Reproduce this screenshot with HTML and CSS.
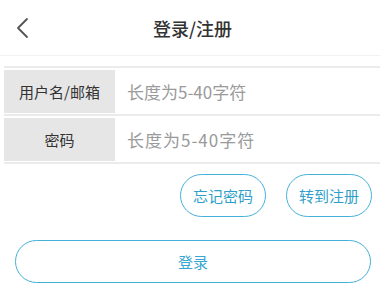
FILE: index.html
```html
<!DOCTYPE html>
<html lang="zh-CN">
<head>
<meta charset="UTF-8" />
<meta name="viewport" content="width=device-width, initial-scale=1.0">
<title>登录/注册</title>
<link rel="stylesheet" href="styles.css">
</head>
<body>
<header>
<a class="back" href="#">
<svg width="14" height="22" viewBox="0 0 14 22"><path d="M12 2 L3 11 L12 20" fill="none" stroke="#555" stroke-width="1.8" stroke-linecap="round" stroke-linejoin="round"/></svg>
</a>
<div class="title">登录/注册</div>
<div></div>
</header>

<div class="form">
<div class="row">
<label class="label">用户名/邮箱</label>
<input class="field" type="text" placeholder="长度为5-40字符">
</div>
<div class="row">
<label class="label">密码</label>
<input class="field pwd" type="password" placeholder="长度为5-40字符">
</div>
</div>

<div class="links">
<a class="pill" href="#">忘记密码</a>
<a class="pill" href="#">转到注册</a>
</div>

<div class="login">
<button class="login-btn">登录</button>
</div>
</body>
</html>
```

FILE: styles.css
```css
body {
  margin: 0;
  font-family: "Noto Sans CJK SC", "Noto Sans", sans-serif;
  background-color: #fff;
  color: #333;
}
header {
  height: 55px;
  display: grid;
  grid-template-columns: 60px 1fr 60px;
  align-items: center;
  border-bottom: 1px solid #f2f2f2;
}
.back {
  padding-left: 15px;
  display: flex;
  align-items: center;
}
.title {
  text-align: center;
  font-size: 18px;
  font-weight: 500;
  color: #333;
  margin-left: 5px;
}
.form {
  margin: 10px 0 0 4px;
  border-top: 2px solid #ebebeb;
}
.row {
  display: flex;
  align-items: center;
  padding: 2px 0 1px;
  border-bottom: 2px solid #ebebeb;
}
.label {
  width: 111px;
  height: 43px;
  background-color: #e6e6e6;
  display: flex;
  align-items: center;
  justify-content: center;
  font-size: 15px;
  color: #333;
}
.field {
  flex: 1;
  border: none;
  outline: none;
  height: 43px;
  padding: 0 0 0 12px;
  font-family: "Noto Sans CJK SC", "Open Sans", sans-serif;
  font-size: 17px;
  color: #333;
  background: transparent;
}
.field::placeholder {
  color: #9a9a9a;
}
.pwd::placeholder {
  letter-spacing: 1px;
}
.links {
  display: flex;
  justify-content: flex-end;
  gap: 20px;
  padding: 10px 8px 0 0;
}
.pill {
  width: 86px;
  height: 43px;
  box-sizing: border-box;
  border: 1.5px solid #45b0d8;
  border-radius: 22px;
  display: flex;
  align-items: center;
  justify-content: center;
  color: #2f9fca;
  font-size: 15px;
  text-decoration: none;
}
.login {
  padding: 23px 9px 0 15px;
}
.login-btn {
  width: 100%;
  height: 43px;
  background: #fff;
  border: 1.5px solid #45b0d8;
  border-radius: 22px;
  color: #37a6d0;
  font-family: "Noto Sans CJK SC", sans-serif;
  font-size: 15px;
}
```
